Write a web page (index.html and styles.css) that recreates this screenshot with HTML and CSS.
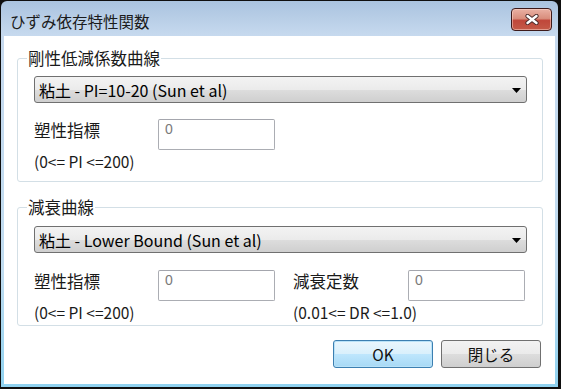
FILE: index.html
```html
<!DOCTYPE html>
<html lang="ja">
<head>
    <meta charset="UTF-8">
    <meta name="viewport" content="width=device-width, initial-scale=1.0">
    <title>ひずみ依存特性関数</title>
    <link rel="stylesheet" href="styles.css">
</head>
<body>
    <div class="window">
        <div class="titlebar">
            <span class="title">ひずみ依存特性関数</span>
            <button class="close-btn" aria-label="閉じる">
                <svg width="14" height="11" viewBox="0 0 14 11">
                    <path d="M2.5 2 L11.5 9 M11.5 2 L2.5 9" stroke="#4a2a2a" stroke-width="4.2" stroke-linecap="round"/>
                    <path d="M2.5 2 L11.5 9 M11.5 2 L2.5 9" stroke="#fff" stroke-width="2.4" stroke-linecap="round"/>
                </svg>
            </button>
        </div>

        <div class="client">
            <!-- 剛性低減係数曲線 -->
            <fieldset class="group">
                <legend>剛性低減係数曲線</legend>
                <div class="group-body">
                    <div class="combo">
                        <span>粘土 - PI=10-20 (Sun et al)</span>
                        <svg class="arrow" width="9" height="5" viewBox="0 0 9 5"><path d="M0 0 H9 L4.5 5 Z" fill="#000"/></svg>
                    </div>
                    <div class="params">
                        <label class="param-label">塑性指標</label>
                        <input class="num-input" type="text" value="0">
                        <span class="range">(0&lt;= PI &lt;=200)</span>
                    </div>
                </div>
            </fieldset>

            <!-- 減衰曲線 -->
            <fieldset class="group group-second">
                <legend>減衰曲線</legend>
                <div class="group-body">
                    <div class="combo">
                        <span>粘土 - Lower Bound (Sun et al)</span>
                        <svg class="arrow" width="9" height="5" viewBox="0 0 9 5"><path d="M0 0 H9 L4.5 5 Z" fill="#000"/></svg>
                    </div>
                    <div class="params">
                        <label class="param-label">塑性指標</label>
                        <input class="num-input" type="text" value="0">
                        <span class="range">(0&lt;= PI &lt;=200)</span>
                        <label class="param-label col-b">減衰定数</label>
                        <input class="num-input col-b-input" type="text" value="0">
                        <span class="range col-b">(0.01&lt;= DR &lt;=1.0)</span>
                    </div>
                </div>
            </fieldset>

            <div class="buttons">
                <button class="btn btn-default">OK</button>
                <button class="btn">閉じる</button>
            </div>
        </div>
    </div>
</body>
</html>
```
FILE: styles.css
```css
body {
    margin: 0;
    width: 561px;
    height: 389px;
    overflow: hidden;
    background-color: #0f0f0f;
    font-family: "Noto Sans CJK JP", "Liberation Sans", sans-serif;
    color: #1a1a1a;
}
.window {
    width: 557px;
    height: 386px;
    margin: 1px 0 0 1px;
    padding: 0 3px 3px;
    box-sizing: border-box;
    display: flex;
    flex-direction: column;
    border-radius: 6px 6px 0 0;
    background: linear-gradient(#aac3df 0, #c6d9ee 34px, #c0dcf0 70%, #8fd2f0 100%);
}
.titlebar {
    height: 35px;
    flex-shrink: 0;
    display: flex;
    justify-content: space-between;
    align-items: flex-start;
}
.title {
    font-size: 15.5px;
    line-height: 18px;
    margin: 11px 0 0 6px;
    color: #1b1b1b;
}
.close-btn {
    width: 41px;
    height: 23px;
    margin: 7px 3px 0 0;
    padding: 0;
    border: 1px solid #3d1a1a;
    border-radius: 4px;
    background: linear-gradient(#eab1a4 0, #d98e7d 45%, #c0473a 55%, #c45a48 100%);
    box-shadow: inset 0 0 0 1px rgba(255, 220, 210, 0.5);
    display: flex;
    align-items: center;
    justify-content: center;
}
.client {
    flex: 1;
    background-color: #fff;
    padding: 13px 12px 0 13px;
}
.group {
    margin: 0;
    padding: 0;
    border: 1px solid #d3dfe6;
    border-radius: 3px;
}
.group legend {
    margin-left: 9px;
    padding: 0 1px;
    font-size: 16.5px;
    line-height: 18px;
    color: #1a1a1a;
}
.group-body {
    padding: 9px 15px 11px 16px;
}
.group-second {
    margin-top: 16px;
}
.group-second .group-body {
    padding-top: 10px;
    padding-bottom: 4px;
}
.combo {
    height: 27px;
    box-sizing: border-box;
    border: 1px solid #707070;
    border-radius: 3px;
    background: linear-gradient(#f3f3f3 0, #ebebeb 50%, #dddddd 51%, #cfcfcf 100%);
    display: flex;
    align-items: center;
    justify-content: space-between;
    padding: 0 5px 0 4px;
    font-size: 16px;
    color: #000;
}
.combo .arrow {
    margin-top: 1px;
}
.params {
    display: grid;
    grid-template-columns: 124px 117px 18px 115px 117px;
    grid-template-rows: 31px auto;
    margin-top: 16px;
}
.group-second .params {
    margin-top: 17px;
}
.param-label {
    grid-row: 1;
    grid-column: 1;
    font-size: 16.5px;
    line-height: 18px;
    padding-top: 2px;
}
.param-label.col-b {
    grid-column: 4;
}
.num-input {
    grid-row: 1;
    grid-column: 2;
    width: 117px;
    height: 31px;
    box-sizing: border-box;
    margin: 0;
    padding: 0 6px 12px;
    border: 1px solid #abadb3;
    border-top-color: #a4a6ad;
    border-radius: 2px;
    font-family: "Liberation Sans", sans-serif;
    font-size: 14px;
    color: #7a7a7a;
    background-color: #fff;
}
.num-input.col-b-input {
    grid-column: 5;
}
.range {
    grid-row: 2;
    grid-column: 1 / span 2;
    margin-top: 2px;
    font-size: 15.5px;
    line-height: 18px;
}
.range.col-b {
    grid-column: 4 / span 2;
}
.buttons {
    display: flex;
    justify-content: flex-end;
    gap: 8px;
    margin: 14px 2px 0 0;
}
.btn {
    width: 100px;
    height: 28px;
    box-sizing: border-box;
    border: 1px solid #707070;
    border-radius: 3px;
    background: linear-gradient(#f2f2f2 0, #ebebeb 50%, #dddddd 51%, #cfcfcf 100%);
    font-family: "Noto Sans CJK JP", sans-serif;
    font-size: 15.5px;
    color: #111;
    padding: 0;
}
.btn-default {
    border-color: #3c7fb1;
    background: linear-gradient(#eaf6fd 0, #d9f0fc 50%, #bee6fd 51%, #a7d9f5 100%);
    box-shadow: inset 0 0 0 1px #b9e2f8;
}
```
